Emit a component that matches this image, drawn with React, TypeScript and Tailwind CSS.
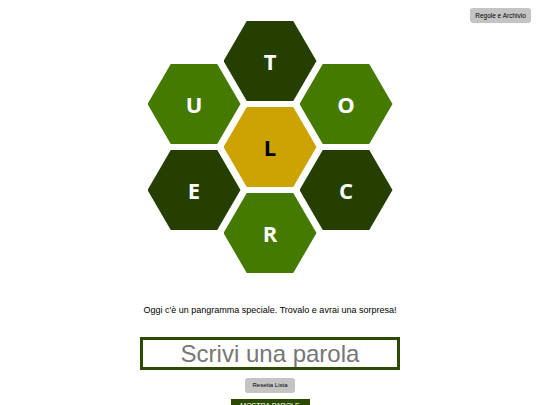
import React from "react";

const hexClip = "[clip-path:polygon(25%_0,75%_0,100%_50%,75%_100%,25%_100%,0_50%)]";

function Hex({ letter, tone }: { letter: string; tone: "dark" | "light" | "gold" }) {
  const bg = tone === "dark" ? "bg-[#243f00]" : tone === "light" ? "bg-[#457a00]" : "bg-[#cca300]";
  const fg = tone === "gold" ? "text-black" : "text-white";
  return (
    <div
      className={`w-[93px] h-[80px] flex items-center justify-center ${bg} ${fg} ${hexClip} text-[22px] font-bold [font-family:'Open_Sans',sans-serif]`}
    >
      {letter}
    </div>
  );
}

export default function App() {
  return (
    <div className="w-[540px] h-[405px] overflow-hidden bg-white relative [font-family:'Liberation_Sans',Arial,sans-serif]">
      <div className="flex justify-end pt-[8px] pr-[9px]">
        <button className="w-[61px] h-[15px] rounded-[3px] bg-[#c4c4c4] text-[6.5px] text-black flex items-center justify-center">
          Regole e Archivio
        </button>
      </div>
      <div className="flex justify-center mt-[-2px]">
        <div className="flex flex-col gap-[6px] pt-[43px] mr-[-17px]">
          <Hex letter="U" tone="light" />
          <Hex letter="E" tone="dark" />
        </div>
        <div className="flex flex-col gap-[6px]">
          <Hex letter="T" tone="dark" />
          <Hex letter="L" tone="gold" />
          <Hex letter="R" tone="light" />
        </div>
        <div className="flex flex-col gap-[6px] pt-[43px] ml-[-17px]">
          <Hex letter="O" tone="light" />
          <Hex letter="C" tone="dark" />
        </div>
      </div>
      <p className="mt-[31px] text-center text-[9px] text-black leading-[12px]">
        Oggi c'è un pangramma speciale. Trovalo e avrai una sorpresa!
      </p>
      <div className="flex justify-center mt-[21px]">
        <input
          className="w-[260px] h-[33px] border-[3px] border-[#2b4a00] text-center text-[24px] outline-none placeholder:text-[#777777]"
          placeholder="Scrivi una parola"
        />
      </div>
      <div className="flex justify-center mt-[8px]">
        <button className="w-[50px] h-[15px] rounded-[3px] bg-[#c4c4c4] text-[6px] text-black flex items-center justify-center">
          Resetta Lista
        </button>
      </div>
      <div className="flex justify-center mt-[6px]">
        <button className="w-[79px] h-[15px] bg-[#2b4a00] text-[7px] text-white flex items-center justify-center">
          MOSTRA PAROLE
        </button>
      </div>
    </div>
  );
}
